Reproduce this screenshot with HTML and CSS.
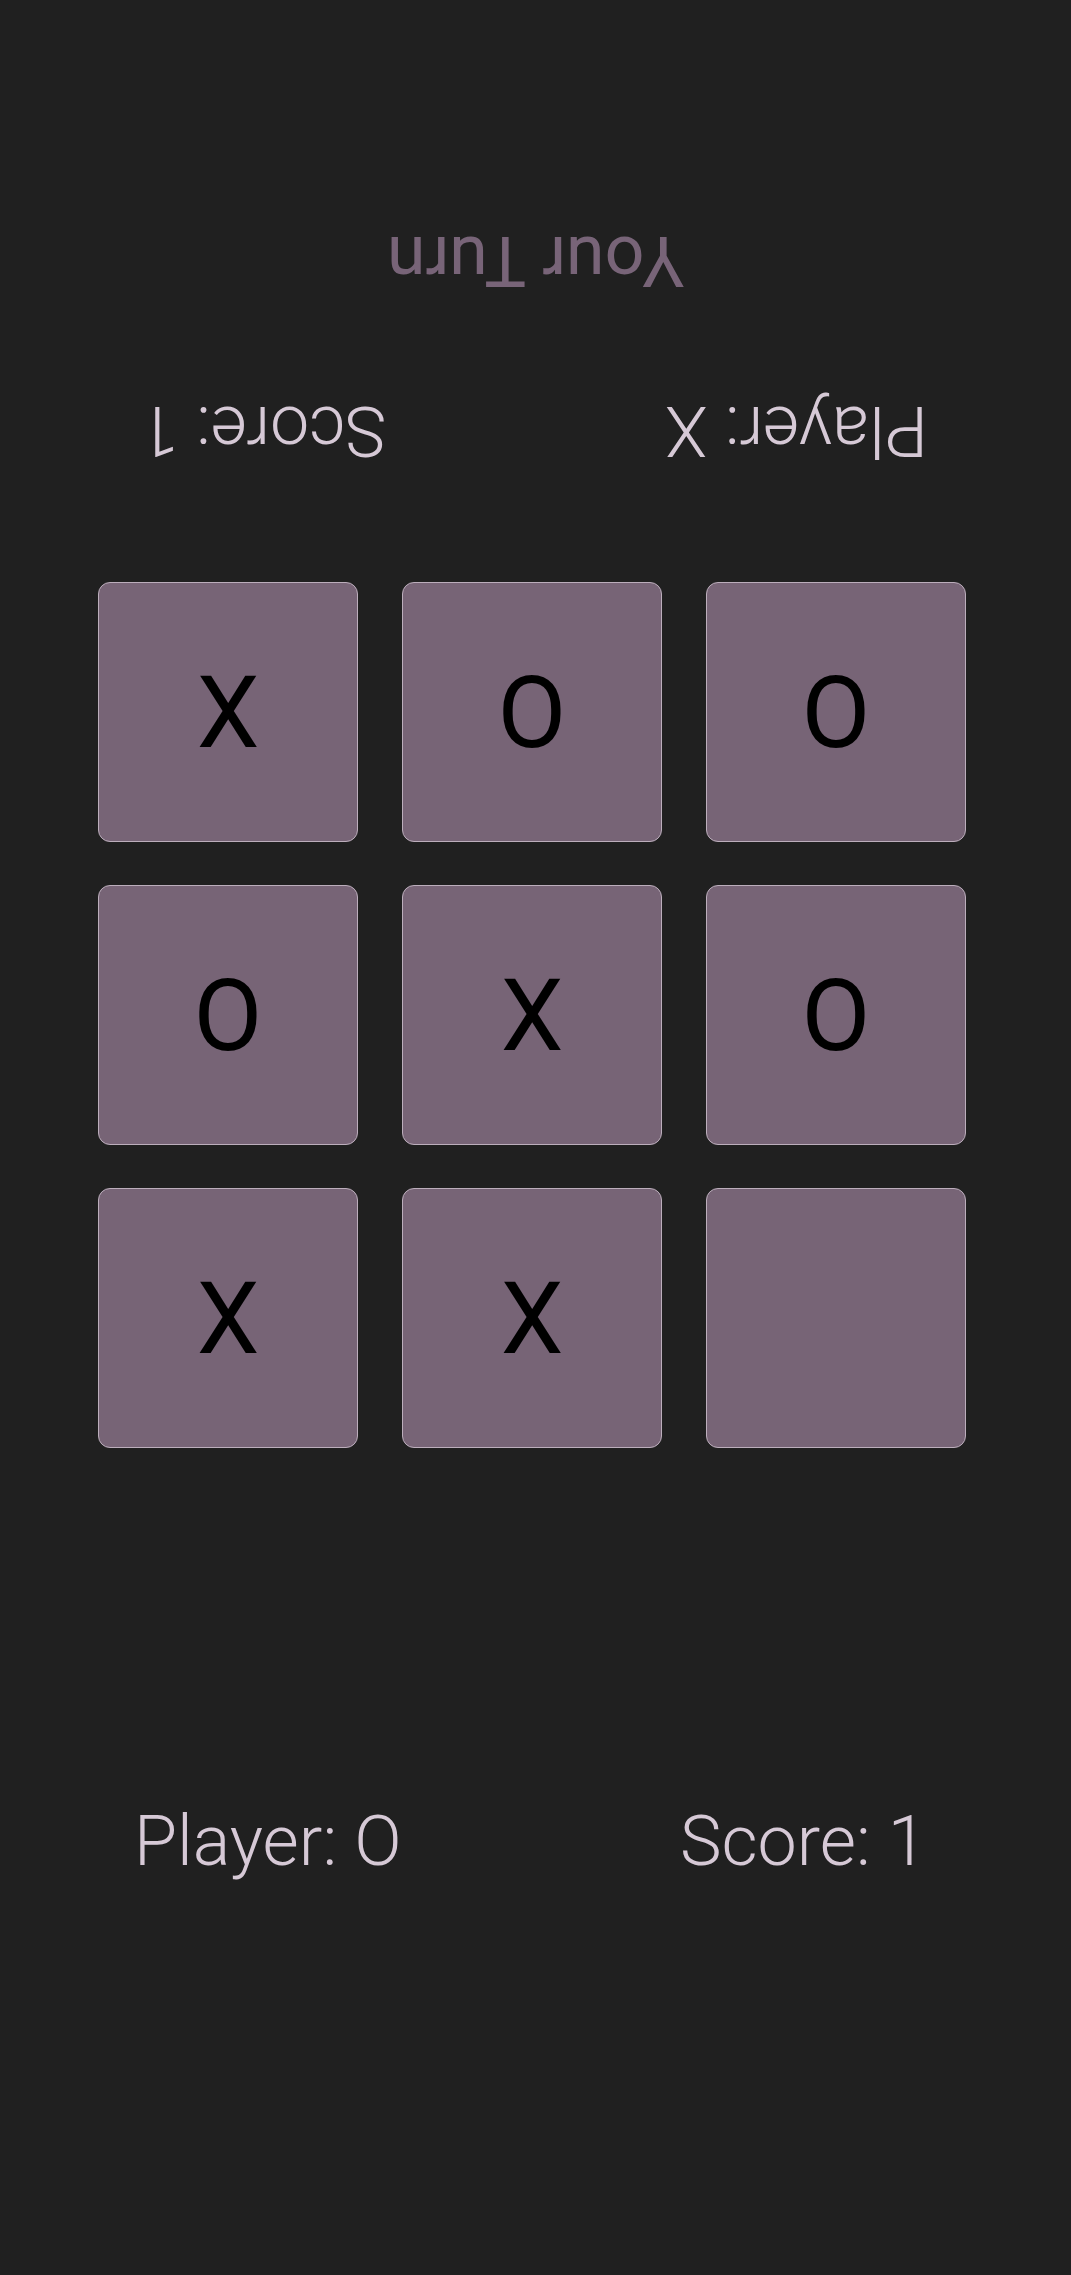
FILE: index.html
```html
<!DOCTYPE html>
<html lang="en">
<head>
<meta charset="utf-8">
<title>Tic Tac Toe</title>
<link rel="stylesheet" href="styles.css">
</head>
<body>
<main class="game">
  <div class="turn">Your Turn</div>
  <div class="info info-top">
    <span class="info-item">Player: X</span>
    <span class="info-item">Score: 1</span>
  </div>
  <div class="board">
    <div class="cell">X</div>
    <div class="cell">O</div>
    <div class="cell">O</div>
    <div class="cell">O</div>
    <div class="cell">X</div>
    <div class="cell">O</div>
    <div class="cell">X</div>
    <div class="cell">X</div>
    <div class="cell"></div>
  </div>
  <div class="info info-bottom">
    <span class="info-item">Player: O</span>
    <span class="info-item">Score: 1</span>
  </div>
</main>
</body>
</html>
```
FILE: styles.css
```css
html, body {
  margin: 0;
  padding: 0;
  background: #202020;
}
body {
  font-family: Roboto, "Liberation Sans", sans-serif;
  width: 1071px;
  height: 2275px;
  overflow: hidden;
}
.game {
  display: flex;
  flex-direction: column;
  padding-top: 221px;
}
.turn {
  font-size: 70px;
  line-height: 80px;
  height: 80px;
  font-weight: 400;
  color: #786478;
  text-align: center;
  transform: rotate(180deg);
}
.info {
  display: flex;
  font-size: 70px;
  line-height: 80px;
  height: 80px;
  font-weight: 300;
  color: #d6c9d6;
}
.info-item {
  flex: 1;
  text-align: center;
}
.info-top {
  margin-top: 90px;
  padding-left: 5px;
  transform: translateX(-3px) rotate(180deg);
}
.board {
  margin-top: 111px;
  padding-left: 98px;
  display: grid;
  grid-template-columns: repeat(3, 260px);
  grid-auto-rows: 260px;
  column-gap: 44px;
  row-gap: 43px;
}
.cell {
  box-sizing: border-box;
  background: #776476;
  border: 1px solid #bcaebc;
  border-radius: 12px;
  display: flex;
  align-items: center;
  justify-content: center;
  color: #000;
  font-size: 100px;
  font-weight: 400;
}
.info-bottom {
  margin-top: 353px;
}
```
